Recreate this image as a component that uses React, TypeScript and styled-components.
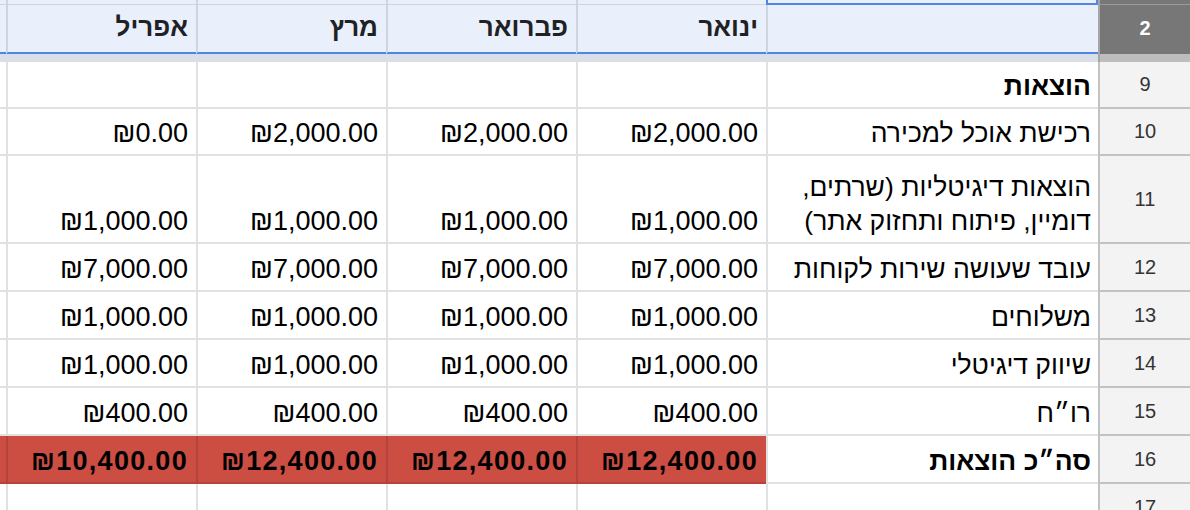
import React from "react";
import styled, { createGlobalStyle, css } from "styled-components";

const GlobalStyle = createGlobalStyle`
  html, body { margin: 0; padding: 0; background: #ffffff; overflow: hidden; }
  body { font-family: "Liberation Sans", Arial, "DejaVu Sans", sans-serif; }
`;

const GRID = "#e1e1e1";
const HEAD_GRID = "#cfd5de";
const ROWHEAD_GRID = "#c2c2c2";
const RED = "#cc4e43";
const RED_GRID = "#b3443b";

const Sheet = styled.div`
  display: grid;
  grid-template-columns: 6px repeat(4, 190px) 332px 92px;
  width: 1190px;
  height: 510px;
  overflow: hidden;
  align-content: start;
`;

const TopCell = styled.div<{ $col: number; $selected?: boolean }>`
  box-sizing: border-box;
  height: 5px;
  background: #e9f0fc;
  border-bottom: 1px solid ${HEAD_GRID};
  ${(p) => p.$col > 0 && css`border-left: 2px solid ${HEAD_GRID};`}
  ${(p) =>
    p.$selected &&
    css`
      border: 2px solid #4f86e6;
      border-top: none;
    `}
`;

const TopRowHead = styled.div`
  box-sizing: border-box;
  height: 5px;
  background: #777777;
  border-left: 2px solid #a6a6a6;
  border-bottom: 1px solid #9a9a9a;
`;

const HeadCell = styled.div<{ $col: number }>`
  box-sizing: border-box;
  height: 49px;
  background: #e9f0fc;
  border-bottom: 2px solid #4f86e6;
  ${(p) => p.$col > 0 && css`border-left: 2px solid ${HEAD_GRID};`}
  display: flex;
  align-items: center;
  justify-content: flex-end;
  padding: 0 8px 2px 0;
  font-size: 26px;
  font-weight: bold;
  color: #202124;
`;

const HeadRowNum = styled.div`
  box-sizing: border-box;
  height: 49px;
  background: #777777;
  border-left: 2px solid #a6a6a6;
  display: flex;
  align-items: center;
  justify-content: center;
  font-size: 20px;
  font-weight: bold;
  color: #ffffff;
  padding-bottom: 2px;
`;

const Band = styled.div<{ $rowhead?: boolean }>`
  height: 8px;
  background: ${(p) => (p.$rowhead ? "#bdbdbd" : "#dadfe7")};
  ${(p) => p.$rowhead && css`border-left: 2px solid #a6a6a6; box-sizing: border-box;`}
`;

const Cell = styled.div<{ $col: number; $h: number; $red?: boolean; $bold?: boolean; $label?: boolean }>`
  box-sizing: border-box;
  height: ${(p) => p.$h}px;
  background: ${(p) => (p.$red ? RED : "#ffffff")};
  border-bottom: 2px solid ${(p) => (p.$red ? RED_GRID : GRID)};
  ${(p) => p.$col > 0 && css`border-left: 2px solid ${p.$red ? RED_GRID : GRID};`}
  display: flex;
  align-items: flex-end;
  justify-content: flex-end;
  padding: 0 ${(p) => (p.$label ? 7 : 8)}px 4px 0;
  font-size: ${(p) => (p.$label ? 26.5 : 27)}px;
  line-height: 34px;
  color: #000000;
  font-weight: ${(p) => (p.$bold ? "bold" : "normal")};
  letter-spacing: ${(p) => (p.$bold && !p.$label ? "1.3px" : "normal")};
  white-space: nowrap;
  overflow: hidden;
`;

const RowNum = styled.div<{ $h: number }>`
  box-sizing: border-box;
  height: ${(p) => p.$h}px;
  background: #f3f3f3;
  border-left: 2px solid ${ROWHEAD_GRID};
  border-bottom: 2px solid ${ROWHEAD_GRID};
  display: flex;
  align-items: center;
  justify-content: center;
  font-size: 20px;
  color: #333333;
`;

const Rtl = styled.span`
  direction: rtl;
  unicode-bidi: isolate;
  display: block;
  text-align: right;
`;

const Ltr = styled.span`
  direction: ltr;
  unicode-bidi: isolate;
`;

type Row = {
  num: number;
  h: number;
  label: React.ReactNode;
  values: string[]; // Jan, Feb, Mar, Apr
  bold?: boolean;
  red?: boolean;
};

const rows: Row[] = [
  { num: 9, h: 47, label: "הוצאות", values: ["", "", "", ""], bold: true },
  { num: 10, h: 47, label: "רכישת אוכל למכירה", values: ["₪2,000.00", "₪2,000.00", "₪2,000.00", "₪0.00"] },
  {
    num: 11,
    h: 88,
    label: (
      <>
        הוצאות דיגיטליות (שרתים,
        <br />
        דומיין, פיתוח ותחזוק אתר)
      </>
    ),
    values: ["₪1,000.00", "₪1,000.00", "₪1,000.00", "₪1,000.00"],
  },
  { num: 12, h: 48, label: "עובד שעושה שירות לקוחות", values: ["₪7,000.00", "₪7,000.00", "₪7,000.00", "₪7,000.00"] },
  { num: 13, h: 48, label: "משלוחים", values: ["₪1,000.00", "₪1,000.00", "₪1,000.00", "₪1,000.00"] },
  { num: 14, h: 48, label: "שיווק דיגיטלי", values: ["₪1,000.00", "₪1,000.00", "₪1,000.00", "₪1,000.00"] },
  { num: 15, h: 48, label: "רו״ח", values: ["₪400.00", "₪400.00", "₪400.00", "₪400.00"] },
  {
    num: 16,
    h: 48,
    label: "סה״כ הוצאות",
    values: ["₪12,400.00", "₪12,400.00", "₪12,400.00", "₪10,400.00"],
    bold: true,
    red: true,
  },
  { num: 17, h: 48, label: "", values: ["", "", "", ""] },
];

const months = ["ינואר", "פברואר", "מרץ", "אפריל"];

export default function App() {
  return (
    <>
      <GlobalStyle />
      <Sheet>
        {[0, 1, 2, 3, 4].map((c) => (
          <TopCell key={`t${c}`} $col={c} />
        ))}
        <TopCell $col={5} $selected />
        <TopRowHead />

        <HeadCell $col={0} />
        {[3, 2, 1, 0].map((m, i) => (
          <HeadCell key={`h${m}`} $col={i + 1}>
            <Rtl>{months[m]}</Rtl>
          </HeadCell>
        ))}
        <HeadCell $col={5} />
        <HeadRowNum>2</HeadRowNum>

        {[0, 1, 2, 3, 4, 5].map((c) => (
          <Band key={`b${c}`} />
        ))}
        <Band $rowhead />

        {rows.map((r) => (
          <React.Fragment key={r.num}>
            <Cell $col={0} $h={r.h} $red={r.red} />
            {[3, 2, 1, 0].map((m, i) => (
              <Cell key={m} $col={i + 1} $h={r.h} $red={r.red} $bold={r.bold}>
                <Ltr>{r.values[m]}</Ltr>
              </Cell>
            ))}
            <Cell $col={5} $h={r.h} $bold={r.bold} $label>
              <Rtl>{r.label}</Rtl>
            </Cell>
            <RowNum $h={r.h}>{r.num}</RowNum>
          </React.Fragment>
        ))}
      </Sheet>
    </>
  );
}
